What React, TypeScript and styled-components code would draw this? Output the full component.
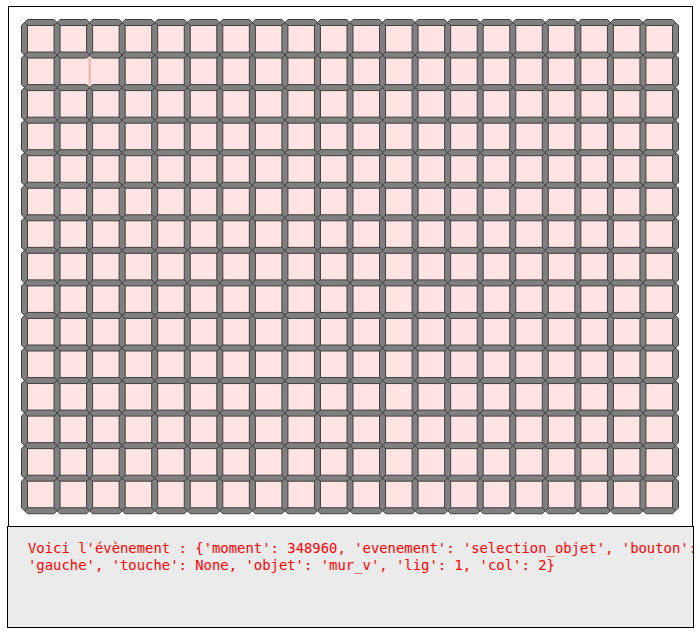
import React from "react";
import styled, { createGlobalStyle } from "styled-components";

const COLS = 20;
const ROWS = 15;
const PITCH = 32.55;
const X0 = 24.5;
const Y0 = 22.5;
const HALF = 3;

// walls that have been removed: [lig, col] of vertical walls
const removedV = [[1, 2]];

const isRemovedV = (lig: number, col: number) =>
  removedV.some(([l, c]) => l === lig && c === col);

const hWall = (x0: number, x1: number, y: number) =>
  `${x0},${y} ${x0 + HALF},${y - HALF} ${x1 - HALF},${y - HALF} ${x1},${y} ${x1 - HALF},${y + HALF} ${x0 + HALF},${y + HALF}`;

const vWall = (x: number, y0: number, y1: number) =>
  `${x},${y0} ${x + HALF},${y0 + HALF} ${x + HALF},${y1 - HALF} ${x},${y1} ${x - HALF},${y1 - HALF} ${x - HALF},${y0 + HALF}`;

const Maze: React.FC = () => {
  const walls: React.ReactNode[] = [];
  const ghosts: React.ReactNode[] = [];

  for (let lig = 0; lig < ROWS; lig++) {
    for (let col = 0; col <= COLS; col++) {
      const x = X0 + col * PITCH;
      const y0 = Y0 + lig * PITCH;
      const y1 = y0 + PITCH;
      if (isRemovedV(lig, col)) {
        ghosts.push(
          <rect
            key={`g-${lig}-${col}`}
            x={x - 1}
            y={y0}
            width={2}
            height={PITCH}
            fill="#e4b2b2"
          />
        );
      } else {
        walls.push(<polygon key={`v-${lig}-${col}`} points={vWall(x, y0, y1)} />);
      }
    }
  }

  for (let lig = 0; lig <= ROWS; lig++) {
    for (let col = 0; col < COLS; col++) {
      const x0 = X0 + col * PITCH;
      const y = Y0 + lig * PITCH;
      walls.push(<polygon key={`h-${lig}-${col}`} points={hWall(x0, x0 + PITCH, y)} />);
    }
  }

  return (
    <svg width={683} height={519} viewBox="9 7 683 519">
      <rect
        x={X0}
        y={Y0}
        width={COLS * PITCH}
        height={ROWS * PITCH}
        fill="#ffe4e3"
      />
      {ghosts}
      <g fill="#808080" stroke="#3f3f3f" strokeWidth={1} strokeLinejoin="miter">
        {walls}
      </g>
    </svg>
  );
};

export default function App() {
  return (
    <>
      <GlobalStyle />
      <Page>
        <Board>
          <Maze />
        </Board>
        <Console>
          <ConsoleLine>
            Voici l'évènement : {"{"}'moment': 348960, 'evenement': 'selection_objet', 'bouton':
          </ConsoleLine>
          <ConsoleLine>
            'gauche', 'touche': None, 'objet': 'mur_v', 'lig': 1, 'col': 2{"}"}
          </ConsoleLine>
        </Console>
      </Page>
    </>
  );
}

const GlobalStyle = createGlobalStyle`
  html, body {
    margin: 0;
    background: #ffffff;
  }
`;

const Page = styled.div`
  display: flex;
  flex-direction: column;
  padding: 6px 0 0 8px;
`;

const Board = styled.div`
  width: 683px;
  height: 519px;
  border: 1px solid #000;
  background: #fff;
  line-height: 0;
`;

const Console = styled.div`
  box-sizing: border-box;
  width: 687px;
  height: 102px;
  margin: -1px 0 0 -1px;
  padding: 13px 0 0 20px;
  border: 1px solid #000;
  background: #ebebeb;
  overflow: hidden;
`;

const ConsoleLine = styled.div`
  font-family: "DejaVu Sans Mono", monospace;
  font-size: 13.9px;
  line-height: 17px;
  color: #ff0000;
  white-space: pre;
`;
